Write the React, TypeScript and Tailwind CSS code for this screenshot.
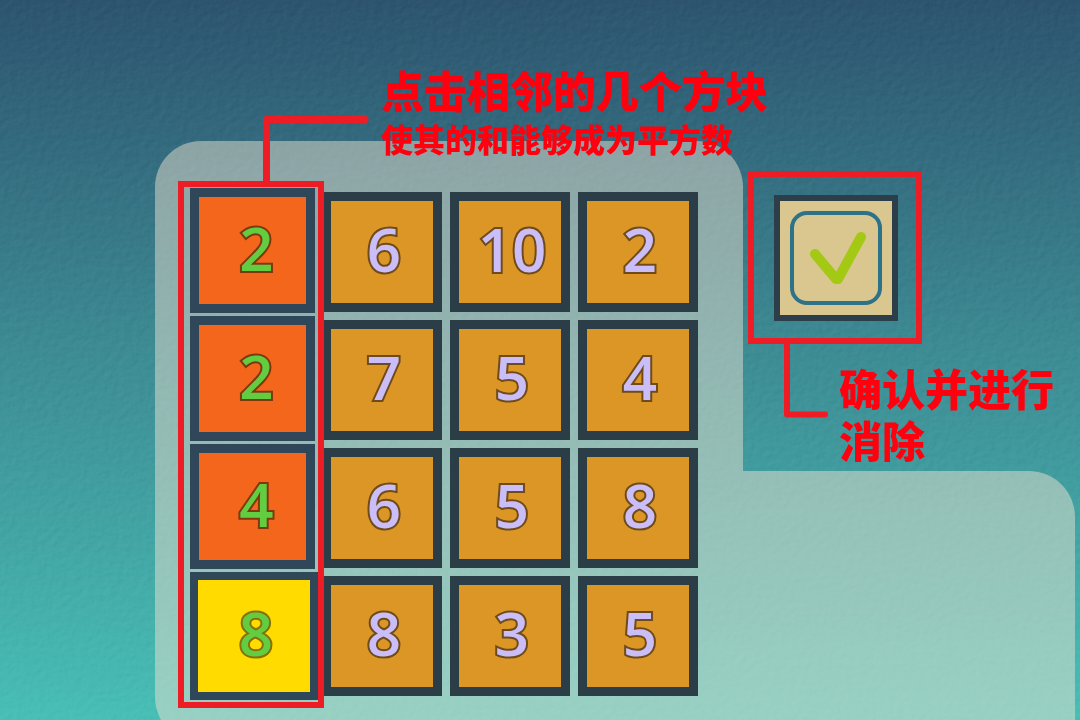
import { useState } from 'react'

type TileState = 'idle' | 'selected' | 'last'

const board: number[][] = [
  [2, 6, 10, 2],
  [2, 7, 5, 4],
  [4, 6, 5, 8],
  [8, 8, 3, 5],
]

const tileStyles: Record<TileState, string> = {
  idle: 'w-[120px] h-[120px] pl-1 border-9 border-[#2b3e47] bg-[#dc9625] text-[#cbbef8] [-webkit-text-stroke:4px_#6e4b1b]',
  selected: '-ml-1 -mt-1 w-[125px] h-[125px] pl-2 border-9 border-[#2f4759] bg-[#f4661b] text-[#62cd40] [-webkit-text-stroke:4px_#7d3a0e]',
  last: '-ml-1 -mt-1 w-[128px] h-[128px] pl-1 border-8 border-[#2f4759] bg-[#ffdb00] text-[#62cd40] [-webkit-text-stroke:4px_#86700a]',
}

// Paper grain under the panels
function Texture() {
  return (
    <svg className="absolute inset-0 w-full h-full pointer-events-none opacity-15 mix-blend-soft-light" aria-hidden="true">
      <filter id="paper" x="0" y="0" width="100%" height="100%" colorInterpolationFilters="sRGB">
        <feTurbulence type="fractalNoise" baseFrequency="0.14 0.16" numOctaves={3} seed={4} />
        <feDiffuseLighting surfaceScale={1} lightingColor="#ffffff">
          <feDistantLight azimuth={225} elevation={30} />
        </feDiffuseLighting>
      </filter>
      <rect width="100%" height="100%" filter="url(#paper)" />
    </svg>
  )
}

function Tile({ value, state, onClick }: { value: number; state: TileState; onClick: () => void }) {
  return (
    <button
      type="button"
      onClick={onClick}
      aria-pressed={state !== 'idle'}
      className={`flex items-center justify-center pb-1.5 text-[60px] leading-none font-semibold [paint-order:stroke_fill] font-['Open_Sans','Noto_Sans',sans-serif] ${tileStyles[state]}`}
    >
      {value}
    </button>
  )
}

export default function App() {
  // keys of the picked tiles, in click order
  const [picked, setPicked] = useState<string[]>(['0-0', '1-0', '2-0', '3-0'])

  const toggle = (key: string) => {
    setPicked(picked.includes(key) ? picked.filter((k) => k !== key) : [...picked, key])
  }

  const stateOf = (key: string): TileState => {
    if (!picked.includes(key)) return 'idle'
    return picked[picked.length - 1] === key ? 'last' : 'selected'
  }

  return (
    <main className="relative isolate min-h-screen w-full overflow-hidden bg-linear-to-b from-[#2d546f] via-[#3d8b93] via-48% to-[#48bfb6] font-['Liberation_Sans','Noto_Sans_CJK_SC',sans-serif]">
      <Texture />

      <div className="relative flex h-screen min-h-[720px] pt-[141px] pl-[155px] pr-[5px]">
        {/* Board panel */}
        <section className="relative w-[588px] h-[602px] shrink-0 rounded-l-[46px] rounded-tr-[46px] bg-[#f2e6d2]/47 pt-[51px] pl-[39px]">
          <div className="grid grid-cols-[repeat(4,120px)] grid-rows-[repeat(4,120px)] gap-2">
            {board.map((row, r) =>
              row.map((value, c) => {
                const key = `${r}-${c}`
                return <Tile key={key} value={value} state={stateOf(key)} onClick={() => toggle(key)} />
              })
            )}
          </div>

          {/* Hint over the first column */}
          <div className="absolute left-[23px] top-10 w-[146px] h-[527px] border-6 border-[#ee1c25] pointer-events-none" />
          <svg className="absolute left-[108px] -top-[25px] pointer-events-none" width="106" height="66" fill="none" aria-hidden="true">
            <path d="M3.5 66V3.5H102" stroke="#ee1c25" strokeWidth="7" strokeLinecap="round" strokeLinejoin="round" />
          </svg>
          <div className="absolute left-[226px] -top-[78px] whitespace-nowrap font-black text-[#ff000f] pointer-events-none">
            <h1 className="text-[43px] leading-[60px]">点击相邻的几个方块</h1>
            <p className="text-[32px] leading-9">使其的和能够成为平方数</p>
          </div>
        </section>

        <div className="flex flex-1 flex-col">
          <div className="relative h-[330px] shrink-0 pt-[54px] pl-[31px]">
            <button
              type="button"
              aria-label="确认"
              className="flex items-center justify-center w-[124px] h-[126px] border-6 border-[#2b3e49] bg-[#dac78f]"
            >
              <svg width="92" height="94" viewBox="0 0 92 94" fill="none" aria-hidden="true">
                <rect x="2" y="2" width="88" height="90" rx="15" stroke="#2d7288" strokeWidth="4" />
                <path d="M25 43L46 68H48L71 26" stroke="#a3c915" strokeWidth="10" strokeLinecap="round" strokeLinejoin="round" />
              </svg>
            </button>

            {/* Hint around the confirm button */}
            <div className="absolute left-[5px] top-[30px] w-[174px] h-[173px] border-6 border-[#ee1c25] pointer-events-none" />
            <svg className="absolute left-[40px] top-[202px] pointer-events-none" width="46" height="76" fill="none" aria-hidden="true">
              <path d="M4 0V71.5H42" stroke="#ee1c25" strokeWidth="6" strokeLinecap="round" strokeLinejoin="round" />
            </svg>
            <p className="absolute left-24 top-56 whitespace-nowrap text-[43px] leading-[52px] font-black text-[#ff000f]">
              确认并进行
              <br />
              消除
            </p>
          </div>
          <div className="h-80 shrink-0 rounded-r-[46px] bg-[#f2e6d2]/47" />
        </div>
      </div>
    </main>
  )
}
